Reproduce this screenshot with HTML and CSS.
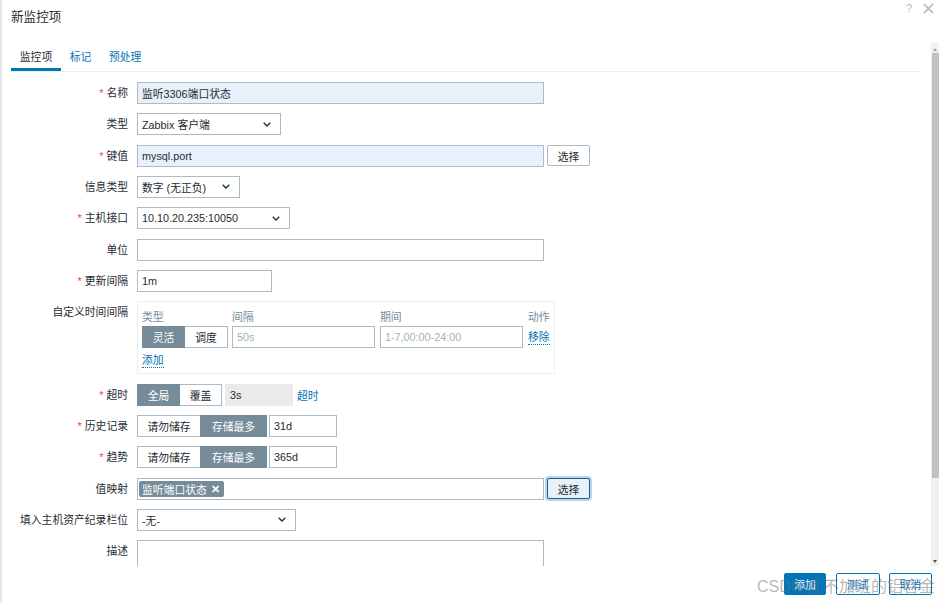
FILE: index.html
```html
<!DOCTYPE html>
<html lang="zh-CN">
<head>
<meta charset="utf-8">
<title>新监控项</title>
<link rel="stylesheet" href="styles.css">
</head>
<body>
<div class="dialog">
  <div class="dlg-head">
    <h4 class="dlg-title">新监控项</h4>
    <div class="dlg-icons">
      <span class="ic-help">?</span>
      <svg class="ic-close" width="11" height="11" viewBox="0 0 11 11"><path d="M1 1 L10 10 M10 1 L1 10" stroke="#aab7bf" stroke-width="1.5" fill="none"/></svg>
    </div>
  </div>
  <div class="dlg-body">
    <div class="scroll-content">
      <ul class="tabs">
        <li class="active">监控项</li>
        <li>标记</li>
        <li>预处理</li>
      </ul>
      <div class="form-grid">
        <label class="lbl req">名称</label>
        <div class="field"><input class="inp hl w-wide" value="监听3306端口状态"></div>

        <label class="lbl">类型</label>
        <div class="field"><div class="sel w-type"><span>Zabbix 客户端</span><svg width="8" height="5" viewBox="0 0 8 5"><path d="M0.7 0.7 L4 4 L7.3 0.7" stroke="#1f2c33" stroke-width="1.3" fill="none"/></svg></div></div>

        <label class="lbl req">键值</label>
        <div class="field row"><input class="inp hl w-wide" value="mysql.port"><button class="btn-alt">选择</button></div>

        <label class="lbl">信息类型</label>
        <div class="field"><div class="sel w-info"><span>数字 (无正负)</span><svg width="8" height="5" viewBox="0 0 8 5"><path d="M0.7 0.7 L4 4 L7.3 0.7" stroke="#1f2c33" stroke-width="1.3" fill="none"/></svg></div></div>

        <label class="lbl req">主机接口</label>
        <div class="field"><div class="sel w-iface"><span>10.10.20.235:10050</span><svg width="8" height="5" viewBox="0 0 8 5"><path d="M0.7 0.7 L4 4 L7.3 0.7" stroke="#1f2c33" stroke-width="1.3" fill="none"/></svg></div></div>

        <label class="lbl">单位</label>
        <div class="field"><input class="inp w-wide" value=""></div>

        <label class="lbl req">更新间隔</label>
        <div class="field"><input class="inp w-delay" value="1m"></div>

        <label class="lbl">自定义时间间隔</label>
        <div class="field">
          <div class="intervals">
            <div class="iv-head">
              <span class="c1">类型</span><span class="c2">间隔</span><span class="c3">期间</span><span class="c4">动作</span>
            </div>
            <div class="iv-row">
              <div class="seg c1"><span class="on s43">灵活</span><span class="s44">调度</span></div>
              <input class="inp c2 ph" value="50s">
              <input class="inp c3 ph" value="1-7,00:00-24:00">
              <a class="link dotted c4">移除</a>
            </div>
            <div class="iv-add"><a class="link dotted">添加</a></div>
          </div>
        </div>

        <label class="lbl req">超时</label>
        <div class="field row">
          <div class="seg"><span class="on s43">全局</span><span class="s43">覆盖</span></div>
          <input class="inp w-short dis" value="3s">
          <a class="link t-link">超时</a>
        </div>

        <label class="lbl req">历史记录</label>
        <div class="field row gap2">
          <div class="seg"><span class="s64">请勿储存</span><span class="on s67">存储最多</span></div>
          <input class="inp w-short" value="31d">
        </div>

        <label class="lbl req">趋势</label>
        <div class="field row gap2">
          <div class="seg"><span class="s64">请勿储存</span><span class="on s67">存储最多</span></div>
          <input class="inp w-short" value="365d">
        </div>

        <label class="lbl">值映射</label>
        <div class="field row">
          <div class="ms w-wide"><span class="chip">监听端口状态<b class="chip-x">✕</b></span></div>
          <button class="btn-alt focus">选择</button>
        </div>

        <label class="lbl">填入主机资产纪录栏位</label>
        <div class="field"><div class="sel w-inv"><span>-无-</span><svg width="8" height="5" viewBox="0 0 8 5"><path d="M0.7 0.7 L4 4 L7.3 0.7" stroke="#1f2c33" stroke-width="1.3" fill="none"/></svg></div></div>

        <label class="lbl">描述</label>
        <div class="field"><textarea class="ta w-wide"></textarea></div>
      </div>
    </div>
    <div class="scrollbar">
      <div class="sb-up"></div>
      <div class="sb-thumb"></div>
      <div class="sb-rest"></div>
      <div class="sb-down"></div>
    </div>
  </div>
  <div class="dlg-foot">
    <button class="fbtn btn-primary w42">添加</button>
    <button class="fbtn btn-outline w44">测试</button>
    <button class="fbtn btn-outline w43">取消</button>
  </div>
  <div class="watermark">CSDN @不加班的铝合金</div>
</div>
</body>
</html>
```

FILE: styles.css
```css
* { box-sizing: border-box; }
html, body { margin: 0; padding: 0; background: #fff; }
body {
  font-family: "Liberation Sans", "Noto Sans CJK SC", sans-serif;
  font-size: 10.8px;
  color: #1f2c33;
}
.dialog {
  position: relative;
  width: 939px;
  height: 603px;
  display: flex;
  flex-direction: column;
  overflow: hidden;
  box-shadow: inset 2px 0 0 #e6e8ea;
}
.dlg-head {
  height: 43px;
  flex: none;
  display: flex;
  justify-content: space-between;
  align-items: flex-start;
  padding: 0 5px 0 11px;
}
.dlg-title {
  margin: 0;
  padding-top: 9px;
  font-size: 12.6px;
  line-height: 16px;
  font-weight: normal;
  color: #1f2c33;
}
.dlg-icons {
  display: flex;
  align-items: center;
  gap: 11px;
  padding-top: 2px;
}
.ic-help {
  font-size: 11px;
  line-height: 12px;
  color: #aab7bf;
}
.ic-close { display: block; }

.dlg-body {
  flex: none;
  height: 523px;
  display: flex;
  overflow: hidden;
}
.scroll-content {
  flex: 1;
  overflow: hidden;
  padding: 0 11px 0 11px;
}
.tabs {
  list-style: none;
  margin: 0;
  padding: 0;
  display: flex;
  height: 29px;
  border-bottom: 1px solid #ebeef0;
}
.tabs li {
  padding: 0 8.8px;
  line-height: 28px;
  height: 28px;
  color: #0275b8;
}
.tabs li.active {
  color: #1f2c33;
  box-shadow: inset 0 -3px 0 #0275b8;
}

.form-grid {
  margin-top: 10px;
  display: grid;
  grid-template-columns: 117px 1fr;
  column-gap: 9px;
  row-gap: 9.33px;
  align-items: start;
}
.lbl {
  text-align: right;
  line-height: 22px;
  white-space: nowrap;
}
.req::before {
  content: "*";
  color: #e0474c;
  margin-right: 3px;
}
.field { display: flex; }
.row { align-items: center; gap: 3px; }
.row.gap2 { gap: 2px; }

.inp {
  height: 22px;
  border: 1px solid #acbbc4;
  padding: 0 4px;
  font: inherit;
  color: #1f2c33;
  background: #fff;
  outline: none;
  margin: 0;
}
.inp.hl { background: #e8f0fb; }
.inp.ph { color: #a3b0b8; }
.inp.dis { background: #ebebeb; border-color: #ebebeb; }
.w-wide { width: 407px; }
.w-delay { width: 135px; }
.w-short { width: 68px; }

.sel {
  height: 22px;
  border: 1px solid #acbbc4;
  background: #fff;
  display: flex;
  align-items: center;
  justify-content: space-between;
  padding: 0 9px 0 4px;
}
.sel svg { display: block; }
.w-type { width: 144px; }
.w-info { width: 103px; }
.w-iface { width: 153px; }
.w-inv { width: 159px; }

.btn-alt {
  height: 21px;
  width: 43px;
  border: 1px solid #acbbc4;
  border-radius: 2px;
  background: #fff;
  font: inherit;
  color: #1f2c33;
  padding: 0;
  margin: 0;
}
.btn-alt.focus {
  background: #e6f1fa;
  border-color: #1d5e8f;
  box-shadow: 0 0 0 2px #b9d7ef;
}

.seg { display: flex; }
.seg span {
  height: 22px;
  border: 1px solid #acbbc4;
  background: #fff;
  display: flex;
  align-items: center;
  justify-content: center;
  white-space: nowrap;
}
.seg span + span { margin-left: -1px; }
.seg .on {
  background: #768d99;
  border-color: #768d99;
  color: #fff;
  position: relative;
}
.s43 { width: 43px; }
.s44 { width: 44px; }
.s64 { width: 64px; }
.s67 { width: 67px; }

.link { color: #0275b8; text-decoration: none; cursor: pointer; }
.link.dotted { border-bottom: 1px dotted #0275b8; line-height: 14px; }
.t-link { margin-left: 1px; }

.intervals {
  border: 1px solid #ebeef0;
  padding: 4px;
}
.iv-head, .iv-row {
  display: grid;
  grid-template-columns: 86px 143px 143px auto;
  align-items: center;
}
.iv-head {
  height: 18px;
  color: #768d99;
  padding-top: 1px;
}
.iv-row { margin-top: 2px; }
.iv-row .inp { width: 143px; }
.c2 { margin-left: 4px; }
.c3 { margin-left: 9px; }
.c4 { margin-left: 14px; justify-self: start; }
.iv-add {
  margin-top: 4px;
  height: 17px;
  display: flex;
  align-items: center;
}

.ms {
  height: 22px;
  border: 1px solid #acbbc4;
  background: #fff;
  display: flex;
  align-items: center;
  padding-left: 1px;
}
.chip {
  height: 16px;
  background: #768d99;
  color: #fff;
  border-radius: 2px;
  display: flex;
  align-items: center;
  padding: 0 4px 0 3px;
  gap: 4px;
  white-space: nowrap;
}
.chip-x { font-size: 11px; font-weight: bold; line-height: 12px; }

.ta {
  height: 60px;
  border: 1px solid #acbbc4;
  resize: none;
  font: inherit;
  margin: 0;
  padding: 3px 4px;
  background: #fff;
}

.scrollbar {
  flex: none;
  width: 8px;
  background: #f1f1f1;
  display: flex;
  flex-direction: column;
  align-items: center;
  padding-left: 1px;
}
.sb-up, .sb-down {
  flex: none;
  height: 10px;
  width: 7px;
  position: relative;
}
.sb-up::after, .sb-down::after {
  content: "";
  position: absolute;
  left: 1px;
  border-left: 2.5px solid transparent;
  border-right: 2.5px solid transparent;
}
.sb-up::after { top: 5px; border-bottom: 3px solid #a3a3a3; }
.sb-down::after { top: 4px; border-top: 3px solid #505050; }
.sb-thumb {
  flex: none;
  width: 7px;
  height: 425px;
  background: #c1c1c1;
}
.sb-rest { flex: 1; }

.dlg-foot {
  flex: 1;
  display: flex;
  justify-content: flex-end;
  align-items: flex-start;
  gap: 9.5px;
  padding: 7px 7px 0 0;
}
.fbtn {
  height: 22px;
  border-radius: 2px;
  font: inherit;
  padding: 0;
  margin: 0;
}
.w42 { width: 42px; }
.w43 { width: 43px; }
.w44 { width: 44px; }
.btn-primary {
  background: #0275b8;
  border: 1px solid #0275b8;
  color: #fff;
}
.btn-outline {
  background: #fff;
  border: 1px solid #0275b8;
  color: #0275b8;
}

.watermark {
  position: absolute;
  right: 4px;
  bottom: 6px;
  font-size: 16px;
  line-height: 20px;
  color: rgba(110, 110, 110, 0.5);
  pointer-events: none;
  white-space: nowrap;
}
```
